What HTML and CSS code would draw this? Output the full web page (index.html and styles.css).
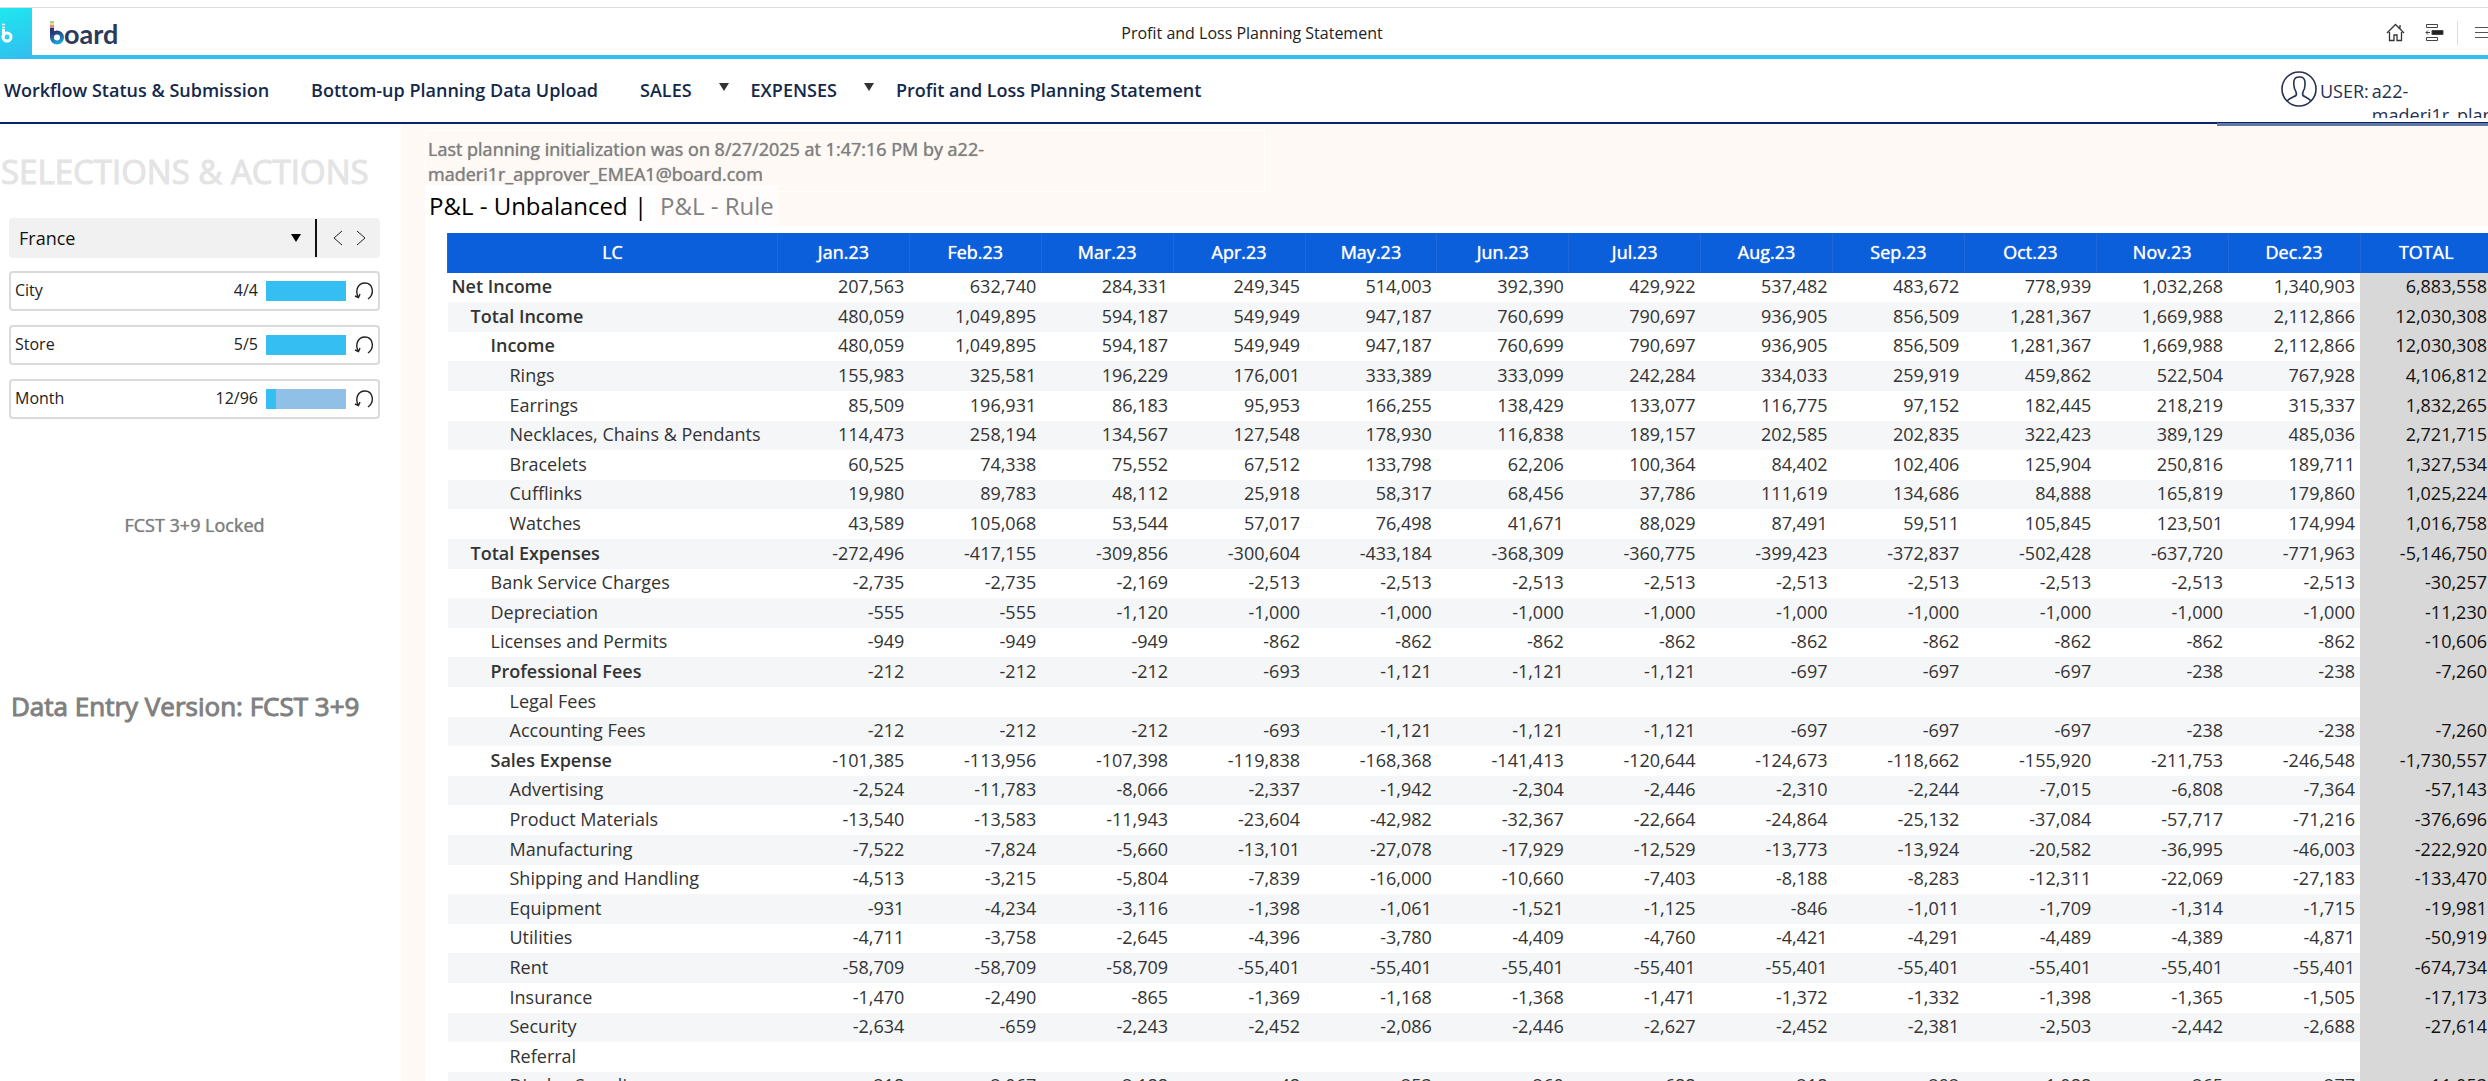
FILE: index.html
```
<!DOCTYPE html>
<html lang="en">
<head>
    <meta charset="UTF-8">
    <title>Profit and Loss Planning Statement</title>
    <link rel="stylesheet" href="styles.css">
</head>
<body>
    <header class="topbar">
        <div class="app-tile">
            <svg width="14" height="22" viewBox="0 0 14 22" fill="none" stroke="#fff">
                <path d="M2 1.500h3M2 4.500h3" stroke-width="1.500"/>
                <path d="M3.500 6v8" stroke-width="3"/>
                <circle cx="7" cy="14" r="4" stroke-width="3"/>
            </svg>
        </div>
        <a class="brand" href="#">
            <svg width="14" height="26" viewBox="0 0 14 26" fill="none">
                <defs>
                    <linearGradient id="logoBlue" gradientUnits="userSpaceOnUse" x1="0" y1="6" x2="6" y2="25">
                        <stop offset="0.3" stop-color="#2c3478"/>
                        <stop offset="1" stop-color="#12b5ee"/>
                    </linearGradient>
                </defs>
                <path d="M0 1h4" stroke="#7cc576" stroke-width="1.500"/>
                <path d="M0 3h4" stroke="#f7c562" stroke-width="1.500"/>
                <path d="M0 5h4" stroke="#ee5a4f" stroke-width="1.500"/>
                <path d="M2 6.500v10" stroke="url(#logoBlue)" stroke-width="4"/>
                <circle cx="7" cy="16.500" r="5" stroke="url(#logoBlue)" stroke-width="4"/>
            </svg>
            <span>oard</span>
        </a>
        <h1>Profit and Loss Planning Statement</h1>
        <div class="tools">
            <button class="icon-button" aria-label="Home">
                <svg width="19" height="19" viewBox="0 0 19 19" fill="none" stroke="#333" stroke-width="1.3">
                    <path d="M1 10l8.500-8.500L18 10M3.500 9v8.500H8V12h3v5.500h4.500V9M14 5.500V2"/>
                </svg>
            </button>
            <button class="icon-button" aria-label="Layout">
                <svg width="19" height="19" viewBox="0 0 19 19" fill="none" stroke="#444">
                    <path d="M1.500 1.500h11v3h-11zM1.500 14.500h11v3h-11z"/>
                    <path d="M7 7.500h11v4H7z" fill="#222"/>
                    <path d="M5 9.500H1M3 7.500l-2 2 2 2"/>
                </svg>
            </button>
            <span class="divider"></span>
            <button class="icon-button menu" aria-label="Menu">
                <svg width="20" height="12" viewBox="0 0 20 12" fill="none" stroke="#555">
                    <path d="M0 .5h20M0 5.500h20M0 10.500h20"/>
                </svg>
            </button>
        </div>
    </header>

    <nav class="navbar">
        <a href="#">Workflow Status &amp; Submission</a>
        <a href="#">Bottom-up Planning Data Upload</a>
        <a class="has-menu" href="#">SALES</a>
        <a class="has-menu" href="#">EXPENSES</a>
        <a href="#">Profit and Loss Planning Statement</a>
        <div class="user">
            <svg width="36" height="36" viewBox="0 0 36 36" fill="none" stroke="#26304f" stroke-width="1.6">
                <circle cx="18" cy="18" r="17"/>
                <path d="M6 30c2-3 7-4 9-5.500 1.500-2-.5-4.500-1.500-7-1.500-5-1.500-11.500 4.500-11.500h1c6 0 5.500 7 4.500 11.500-1 2.500-3 5-1.500 7 2 1.500 6 2.500 8 5.500"/>
            </svg>
            <span>USER:</span>
            <span class="user-name">a22-<br>maderi1r_planner</span>
        </div>
    </nav>

    <div class="layout">
        <aside class="sidebar">
            <h2>SELECTIONS &amp; ACTIONS</h2>
            <div class="entity-picker">
                <div class="select-wrap">
                    <select aria-label="Country">
                        <option>France</option>
                    </select>
                </div>
                <button class="step" aria-label="Previous">
                    <svg width="10" height="16" viewBox="0 0 10 16" fill="none" stroke="#222"><path d="M9 1L1 8l8 7"/></svg>
                </button>
                <button class="step" aria-label="Next">
                    <svg width="10" height="16" viewBox="0 0 10 16" fill="none" stroke="#222"><path d="M1 1l8 7-8 7"/></svg>
                </button>
            </div>
            <div id="filters"></div>
            <p class="lock-note">FCST 3+9 Locked</p>
            <p class="version-note">Data Entry Version: FCST 3+9</p>
        </aside>

        <main class="content">
            <p class="init-note">Last planning initialization was on 8/27/2025 at 1:47:16 PM by a22-<br>maderi1r_approver_EMEA1@board.com</p>
            <div class="tabs">
                <button class="tab active">P&amp;L - Unbalanced |</button>
                <button class="tab">P&amp;L - Rule</button>
            </div>
            <div class="report">
                <table>
                    <thead>
                        <tr id="months"></tr>
                    </thead>
                    <tbody id="rows"></tbody>
                </table>
            </div>
        </main>
    </div>

    <script src="script.js"></script>
</body>
</html>
```
FILE: styles.css
```
* {
    box-sizing: border-box;
}

body {
    margin: 0;
    height: 100vh;
    overflow: hidden;
    display: flex;
    flex-direction: column;
    background: #fff;
    color: #333;
    font-family: "Open Sans", "Noto Sans", sans-serif;
    font-size: 18px;
}

h1, h2, p {
    margin: 0;
    font-weight: normal;
}

button {
    border: none;
    background: none;
    padding: 0;
    font-family: inherit;
    cursor: pointer;
}

svg {
    display: block;
    flex: none;
}

/* Top bar */
.topbar {
    display: grid;
    grid-template-columns: 32px 1fr auto 1fr 16px;
    align-items: center;
    flex: none;
    height: 52px;
    margin-top: 7px;
    border-top: 1px solid #ddd;
    border-bottom: 4px solid #33bff2;
}

.app-tile {
    align-self: start;
    display: flex;
    align-items: center;
    width: 32px;
    height: 51px;
    background: linear-gradient(160deg, #1ee8ee, #33bcf0);
}

.brand {
    display: flex;
    align-items: center;
    padding-left: 18px;
    color: #2c3a5a;
    text-decoration: none;
    font-family: Lato, sans-serif;
    font-size: 27px;
    font-weight: bold;
}

.topbar h1 {
    padding-bottom: 2px;
    color: #222;
    font-size: 16px;
}

.tools {
    grid-column: 4 / -1;
    display: flex;
    justify-content: flex-end;
    align-items: center;
    gap: 20px;
    padding-bottom: 2px;
    overflow: hidden;
}

.divider {
    width: 1px;
    height: 24px;
    margin: 0 -3px 0 -7px;
    background: #ddd;
}

.tools .menu {
    margin-right: -7px;
}

/* Navigation */
.navbar {
    display: flex;
    align-items: center;
    flex: none;
    height: 65px;
    padding-left: 4px;
    gap: 42px;
    border-bottom: 2px solid #0b2468;
}

.navbar a {
    padding-bottom: 1px;
    color: #14284a;
    font-weight: 600;
    text-decoration: none;
    white-space: nowrap;
}

.navbar .has-menu {
    display: flex;
    gap: 27px;
    margin-right: -20px;
}

.has-menu::after {
    content: "";
    margin-top: 5px;
    border: 5px solid transparent;
    border-top: 8px solid #333;
    border-bottom: none;
    align-self: flex-start;
}

.user {
    position: relative;
    display: flex;
    align-items: flex-start;
    align-self: flex-end;
    margin-left: auto;
    width: 271px;
    height: 55px;
    margin-bottom: -4px;
    padding-left: 64px;
    overflow: hidden;
    border-bottom: 3px solid #6478a5;
    color: #26304f;
    line-height: 24px;
}

.user span {
    flex: none;
    height: 39px;
    margin: 8px 0 0 3px;
    overflow: hidden;
    white-space: nowrap;
}

/* Page columns */
.layout {
    display: grid;
    grid-template-columns: 401px minmax(0, 1fr);
    flex: 1;
    min-height: 0;
}

.sidebar {
    padding: 21px 21px 0 9px;
}

.sidebar h2 {
    margin: 0 0 19px -8px;
    color: #e4e4e4;
    font-size: 33px;
    line-height: 54px;
    white-space: nowrap;
    -webkit-text-stroke: 1px #e4e4e4;
}

.entity-picker {
    display: flex;
    align-items: center;
    height: 40px;
    margin-bottom: 13px;
    padding-right: 12px;
    border-radius: 4px;
    background: #f1f1f1;
}

.select-wrap {
    position: relative;
    flex: 1;
    margin-right: 5px;
    border-right: 2px solid #111;
}

.select-wrap::after {
    content: "";
    position: absolute;
    top: 15px;
    right: 14px;
    border: 5px solid transparent;
    border-top: 8px solid #000;
    border-bottom: none;
    pointer-events: none;
}

.entity-picker select {
    display: block;
    width: 100%;
    height: 38px;
    padding: 0 10px;
    border: none;
    appearance: none;
    background: none;
    color: #111;
    font-family: inherit;
    font-size: 18px;
}

.step {
    display: flex;
    justify-content: center;
    align-items: center;
    width: 14px;
    height: 24px;
    margin-left: 9px;
}

.filter {
    display: flex;
    align-items: center;
    height: 40px;
    margin-bottom: 14px;
    padding: 0 4px;
    border: 2px solid #dadada;
    border-radius: 4px;
    color: #222;
    font-size: 16px;
}

.filter span {
    padding-bottom: 2px;
}

.filter .count {
    margin-left: auto;
}

.filter .bar {
    width: 80px;
    height: 20px;
    margin: 0 8px;
    background: #90c0e6;
}

.filter .fill {
    height: 100%;
    background: #35bef2;
}

.lock-note {
    margin-top: 94px;
    color: #808080;
    text-align: center;
    text-shadow: 0 0 1px #808080;
}

.version-note {
    margin-top: 151px;
    padding-left: 2px;
    color: #808080;
    font-size: 26px;
    white-space: nowrap;
    -webkit-text-stroke: 1px #808080;
}

/* Report area */
.content {
    display: flex;
    flex-direction: column;
    min-height: 0;
    padding: 6px 0 0 24px;
    overflow: hidden;
    background: #fff9f6;
}

.init-note {
    width: 840px;
    height: 62px;
    margin-bottom: -7px;
    padding: 6px 2px 0;
    border: 1px solid #fff;
    color: #808080;
    line-height: 25px;
    text-shadow: 0 0 1px #808080;
}

.tabs {
    display: flex;
    height: 41px;
}

.tab {
    padding: 0 4px;
    background: #fffcfb;
    color: #808080;
    font-size: 24px;
    line-height: 40px;
}

.tab.active {
    padding-right: 9px;
    background: #fff;
    color: #000;
}

.report {
    flex: 1;
    min-height: 0;
    padding: 7px 0 0 22px;
    background: #fff;
}

table {
    width: calc(100% + 4px);
    table-layout: fixed;
    border-collapse: collapse;
}

th, td {
    padding: 0 5px 3px;
    line-height: 26px;
    text-align: right;
    white-space: nowrap;
}

thead th {
    height: 40px;
    border-left: 1px solid #2166da;
    background: #0b5fdb;
    color: #fff;
    font-weight: normal;
    text-align: center;
    text-shadow: 0 0 1px #fff;
}

thead th:first-child {
    width: 330px;
}

tbody tr {
    height: 30px;
}

tbody tr:nth-child(5n+1),
tbody tr:nth-child(5n+3) {
    height: 29px;
}

tbody tr:nth-child(even) {
    background: #f4f6f8;
}

tbody th {
    padding-left: 4px;
    font-weight: normal;
    text-align: left;
}

tbody .group th {
    font-weight: 600;
}

tbody .level-1 th { padding-left: 23px; }
tbody .level-2 th { padding-left: 43px; }
tbody .level-3 th { padding-left: 62px; }

tbody td:last-child {
    background: #d8d8d8;
    color: #111;
}
```
FILE: script.js
```
const months = ['Jan', 'Feb', 'Mar', 'Apr', 'May', 'Jun', 'Jul', 'Aug', 'Sep', 'Oct', 'Nov', 'Dec'];

// label, indent level, group row, values Jan-Dec and total
const rows = [
    ['Net Income', 0, true, '207,563 632,740 284,331 249,345 514,003 392,390 429,922 537,482 483,672 778,939 1,032,268 1,340,903 6,883,558'],
    ['Total Income', 1, true, '480,059 1,049,895 594,187 549,949 947,187 760,699 790,697 936,905 856,509 1,281,367 1,669,988 2,112,866 12,030,308'],
    ['Income', 2, true, '480,059 1,049,895 594,187 549,949 947,187 760,699 790,697 936,905 856,509 1,281,367 1,669,988 2,112,866 12,030,308'],
    ['Rings', 3, false, '155,983 325,581 196,229 176,001 333,389 333,099 242,284 334,033 259,919 459,862 522,504 767,928 4,106,812'],
    ['Earrings', 3, false, '85,509 196,931 86,183 95,953 166,255 138,429 133,077 116,775 97,152 182,445 218,219 315,337 1,832,265'],
    ['Necklaces, Chains & Pendants', 3, false, '114,473 258,194 134,567 127,548 178,930 116,838 189,157 202,585 202,835 322,423 389,129 485,036 2,721,715'],
    ['Bracelets', 3, false, '60,525 74,338 75,552 67,512 133,798 62,206 100,364 84,402 102,406 125,904 250,816 189,711 1,327,534'],
    ['Cufflinks', 3, false, '19,980 89,783 48,112 25,918 58,317 68,456 37,786 111,619 134,686 84,888 165,819 179,860 1,025,224'],
    ['Watches', 3, false, '43,589 105,068 53,544 57,017 76,498 41,671 88,029 87,491 59,511 105,845 123,501 174,994 1,016,758'],
    ['Total Expenses', 1, true, '-272,496 -417,155 -309,856 -300,604 -433,184 -368,309 -360,775 -399,423 -372,837 -502,428 -637,720 -771,963 -5,146,750'],
    ['Bank Service Charges', 2, false, '-2,735 -2,735 -2,169 -2,513 -2,513 -2,513 -2,513 -2,513 -2,513 -2,513 -2,513 -2,513 -30,257'],
    ['Depreciation', 2, false, '-555 -555 -1,120 -1,000 -1,000 -1,000 -1,000 -1,000 -1,000 -1,000 -1,000 -1,000 -11,230'],
    ['Licenses and Permits', 2, false, '-949 -949 -949 -862 -862 -862 -862 -862 -862 -862 -862 -862 -10,606'],
    ['Professional Fees', 2, true, '-212 -212 -212 -693 -1,121 -1,121 -1,121 -697 -697 -697 -238 -238 -7,260'],
    ['Legal Fees', 3, false, ''],
    ['Accounting Fees', 3, false, '-212 -212 -212 -693 -1,121 -1,121 -1,121 -697 -697 -697 -238 -238 -7,260'],
    ['Sales Expense', 2, true, '-101,385 -113,956 -107,398 -119,838 -168,368 -141,413 -120,644 -124,673 -118,662 -155,920 -211,753 -246,548 -1,730,557'],
    ['Advertising', 3, false, '-2,524 -11,783 -8,066 -2,337 -1,942 -2,304 -2,446 -2,310 -2,244 -7,015 -6,808 -7,364 -57,143'],
    ['Product Materials', 3, false, '-13,540 -13,583 -11,943 -23,604 -42,982 -32,367 -22,664 -24,864 -25,132 -37,084 -57,717 -71,216 -376,696'],
    ['Manufacturing', 3, false, '-7,522 -7,824 -5,660 -13,101 -27,078 -17,929 -12,529 -13,773 -13,924 -20,582 -36,995 -46,003 -222,920'],
    ['Shipping and Handling', 3, false, '-4,513 -3,215 -5,804 -7,839 -16,000 -10,660 -7,403 -8,188 -8,283 -12,311 -22,069 -27,183 -133,470'],
    ['Equipment', 3, false, '-931 -4,234 -3,116 -1,398 -1,061 -1,521 -1,125 -846 -1,011 -1,709 -1,314 -1,715 -19,981'],
    ['Utilities', 3, false, '-4,711 -3,758 -2,645 -4,396 -3,780 -4,409 -4,760 -4,421 -4,291 -4,489 -4,389 -4,871 -50,919'],
    ['Rent', 3, false, '-58,709 -58,709 -58,709 -55,401 -55,401 -55,401 -55,401 -55,401 -55,401 -55,401 -55,401 -55,401 -674,734'],
    ['Insurance', 3, false, '-1,470 -2,490 -865 -1,369 -1,168 -1,368 -1,471 -1,372 -1,332 -1,398 -1,365 -1,505 -17,173'],
    ['Security', 3, false, '-2,634 -659 -2,243 -2,452 -2,086 -2,446 -2,627 -2,452 -2,381 -2,503 -2,442 -2,688 -27,614'],
    ['Referral', 3, false, ''],
    ['Display Supplies', 3, false, '-218 -2,067 -2,188 -48 -253 -260 -688 -218 -292 -1,088 -265 -277 -11,053']
];

const filters = [
    { name: 'City', selected: 4, total: 4 },
    { name: 'Store', selected: 5, total: 5 },
    { name: 'Month', selected: 12, total: 96 }
];

function element(tag, text, className) {
    const el = document.createElement(tag);
    el.textContent = text || '';
    if (className) el.className = className;
    return el;
}

function renderTable() {
    const head = document.getElementById('months');
    ['LC', ...months.map(m => m + '.23'), 'TOTAL'].forEach(label => {
        const th = element('th', label);
        th.scope = 'col';
        head.appendChild(th);
    });

    const body = document.getElementById('rows');
    rows.forEach(([label, level, group, values]) => {
        const tr = element('tr', '', 'level-' + level + (group ? ' group' : ''));
        const th = element('th', label);
        th.scope = 'row';
        tr.appendChild(th);
        const cells = values.split(' ');
        for (let i = 0; i < 13; i++) {
            tr.appendChild(element('td', cells[i]));
        }
        body.appendChild(tr);
    });
}

function renderFilters() {
    const list = document.getElementById('filters');
    filters.forEach(f => {
        const row = element('div', '', 'filter');
        row.appendChild(element('span', f.name));
        row.appendChild(element('span', f.selected + '/' + f.total, 'count'));
        const bar = element('div', '', 'bar');
        const fill = element('div', '', 'fill');
        fill.style.width = (f.selected / f.total * 100) + '%';
        bar.appendChild(fill);
        row.appendChild(bar);
        const reset = element('button', '', 'reset');
        reset.setAttribute('aria-label', 'Reset ' + f.name);
        reset.innerHTML = '<svg width="20" height="18" viewBox="0 0 20 18" fill="none" stroke="#222" stroke-width="1.4">' +
            '<path d="M4 15C1 8 4 1 11 1c8 0 10 11 3 16M1 14l3.500 1.500L6 12"/></svg>';
        row.appendChild(reset);
        list.appendChild(row);
    });
}

renderTable();
renderFilters();
```
